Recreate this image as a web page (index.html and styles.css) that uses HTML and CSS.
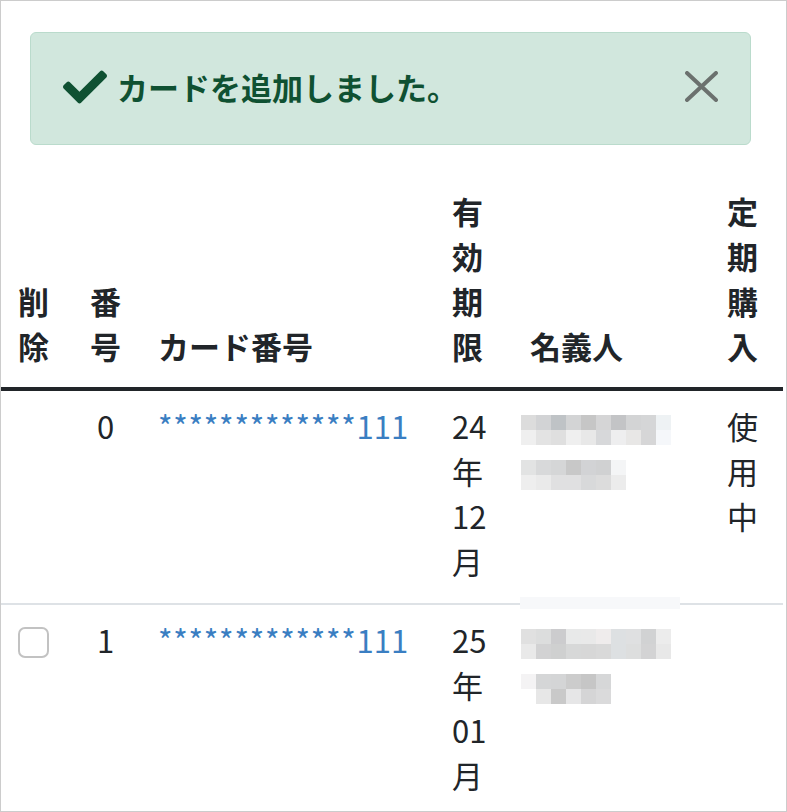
FILE: index.html
```html
<!DOCTYPE html>
<html lang="ja">
<head>
<meta charset="utf-8">
<title>カード一覧</title>
<link rel="stylesheet" href="styles.css">
</head>
<body>
<div class="page">
  <div class="alert">
    <svg class="alert-icon" viewBox="0 0 512 512" aria-hidden="true"><path d="M173.898 439.404l-166.4-166.4c-9.997-9.997-9.997-26.206 0-36.204l36.203-36.204c9.997-9.998 26.207-9.998 36.204 0L192 312.69 432.095 72.596c9.997-9.997 26.207-9.997 36.204 0l36.203 36.204c9.997 9.997 9.997 26.206 0 36.204l-294.4 294.401c-9.998 9.997-26.207 9.997-36.204-.001z"/></svg>
    <span class="alert-text">カードを追加しました。</span>
    <button class="alert-close" type="button" aria-label="閉じる">
      <svg viewBox="0 0 33 31"><path d="M2 2 L31 29 M31 2 L2 29"/></svg>
    </button>
  </div>

  <table class="cards">
    <colgroup>
      <col class="w-del"><col class="w-no"><col class="w-card"><col class="w-exp"><col class="w-name"><col class="w-sub">
    </colgroup>
    <thead>
      <tr>
        <th>削除</th>
        <th class="center">番号</th>
        <th>カード番号</th>
        <th>有効期限</th>
        <th class="name-head">名義人</th>
        <th>定期購入</th>
      </tr>
    </thead>
    <tbody>
      <tr>
        <td></td>
        <td class="center">0</td>
        <td><a class="card-no" href="#"><span class="mask">*************</span>111</a></td>
        <td>24年12月</td>
        <td class="name spill">
          <div class="name-line"><span class="mosaic m1a"></span></div>
          <div class="name-line"><span class="mosaic m1b"></span></div>
        </td>
        <td>使用中</td>
      </tr>
      <tr>
        <td><input class="check" type="checkbox" aria-label="削除"></td>
        <td class="center">1</td>
        <td><a class="card-no" href="#"><span class="mask">*************</span>111</a></td>
        <td>25年01月</td>
        <td class="name">
          <div class="name-line"><span class="mosaic m2a"></span></div>
          <div class="name-line"><span class="mosaic m2b"></span></div>
        </td>
        <td></td>
      </tr>
    </tbody>
  </table>
</div>
</body>
</html>
```

FILE: styles.css
```css
html, body {
  margin: 0;
  padding: 0;
  background: #ffffff;
}

body {
  font-family: "Noto Sans CJK JP", "Noto Sans", sans-serif;
  font-size: 31px;
  line-height: 45px;
  color: #212529;
}

.page {
  box-sizing: border-box;
  width: 787px;
  height: 812px;
  border: 1px solid #cccccc;
  overflow: hidden;
}

/* ---------- alert ---------- */
.alert {
  box-sizing: border-box;
  display: flex;
  align-items: center;
  width: 721px;
  height: 113px;
  margin: 31px 0 30px 29px;
  padding: 0 32px 4px 32px;
  background: #d1e7dd;
  border: 1px solid #badbcc;
  border-radius: 6px;
  color: #0f5132;
}

.alert-icon {
  width: 44px;
  height: 44px;
  fill: #0f5132;
  flex: none;
}

.alert-text {
  margin-left: 10px;
  font-weight: 700;
  flex: 1;
}

.alert-close {
  flex: none;
  width: 33px;
  height: 31px;
  padding: 0;
  margin: 0;
  border: 0;
  background: transparent;
  display: block;
}

.alert-close svg {
  display: block;
  width: 33px;
  height: 31px;
  stroke: #6b716e;
  stroke-width: 4;
  stroke-linecap: round;
  fill: none;
}

/* ---------- table ---------- */
.cards {
  table-layout: fixed;
  width: 782px;
  border-collapse: collapse;
  border-spacing: 0;
}

.w-del { width: 73px; }
.w-no { width: 68px; }
.w-card { width: 294px; }
.w-exp { width: 69px; }
.w-name { width: 206px; }
.w-sub { width: 72px; }

.cards th,
.cards td {
  padding: 16px 16px;
  text-align: left;
  line-height: 45px;
}

.cards th:first-child,
.cards td:first-child {
  padding-left: 17px;
}

.cards th {
  vertical-align: bottom;
  font-weight: 700;
  padding-top: 13px;
  padding-bottom: 19px;
  border-bottom: 4px solid #212529;
}

.cards td {
  vertical-align: top;
  font-weight: 400;
  padding-top: 12px;
  padding-bottom: 20px;
  border-bottom: 2px solid #dee2e6;
}

.cards .center {
  text-align: center;
  padding-right: 21px;
}

.cards .name-head {
  padding-left: 25px;
}

.card-no {
  color: #3a7ec2;
  text-decoration: none;
  white-space: nowrap;
}

.mask {
  letter-spacing: 0.8px;
}

.check {
  appearance: none;
  -webkit-appearance: none;
  box-sizing: border-box;
  display: block;
  width: 31px;
  height: 31px;
  margin: 10px 0 0 0;
  border: 2px solid #c2c2c2;
  border-radius: 7px;
  background: #ffffff;
}

/* ---------- pixelated names ---------- */
.name {
  position: relative;
}

.name-line {
  height: 45px;
}

.mosaic {
  display: block;
  height: 30px;
  position: relative;
  top: 12px;
  background-repeat: no-repeat;
  background-size: 100% 15px;
  background-position: 0 0, 0 15px;
}

.m1a {
  width: 150px;
  background-image:
    linear-gradient(to right, #dcdcdc 0 15px, #d2d3d5 15px 30px, #bfc3c6 30px 45px, #d3d4d5 45px 60px, #c6c6c6 60px 75px, #d5d5d6 75px 90px, #c3c4c6 90px 105px, #d3d4d5 105px 120px, #d5d6d7 120px 135px, #eef2f4 135px 150px),
    linear-gradient(to right, #efefef 0 15px, #e3e3e3 15px 30px, #dfdfdf 30px 45px, #efefef 45px 60px, #e8e8e8 60px 75px, #d7d8da 75px 90px, #eeeeef 90px 105px, #e8e7e6 105px 120px, #d6d6d7 120px 135px, #f5f7fa 135px 150px);
}

.m1b {
  width: 105px;
  background-image:
    linear-gradient(to right, #e2e3e3 0 15px, #d8d9da 15px 30px, #d5d6d7 30px 45px, #c8c8c8 45px 60px, #d2d3d5 60px 75px, #d0d1d2 75px 90px, #f4f5f6 90px 105px),
    linear-gradient(to right, #eeeeee 0 15px, #eaeaea 15px 30px, #e0e0e1 30px 45px, #e0e0e1 45px 60px, #d8d9da 60px 75px, #dcdcdc 75px 90px, #ececec 90px 105px);
}

.m2a {
  width: 150px;
  background-image:
    linear-gradient(to right, #e0e0e0 0 15px, #dcdddd 15px 30px, #ccccce 30px 45px, #e8e9e9 45px 60px, #e9e9e9 60px 75px, #efecec 75px 90px, #dde0e2 90px 105px, #dfe0e1 105px 120px, #d1d2d3 120px 135px, #ececec 135px 150px),
    linear-gradient(to right, #e9e9e9 0 15px, #d2d2d3 15px 30px, #cfd0d0 30px 45px, #d7d8d8 45px 60px, #d7d7d7 60px 75px, #d9d9d9 75px 90px, #dde0e2 90px 105px, #dddede 105px 120px, #d3d3d4 120px 135px, #e8e8e8 135px 150px);
}

.m2b {
  width: 90px;
  background-image:
    linear-gradient(to right, #f4f3f4 0 15px, #d5d6d7 15px 30px, #d4d5d6 30px 45px, #cccccc 45px 60px, #c6c6c6 60px 75px, #d6d7d8 75px 90px),
    linear-gradient(to right, #ffffff 0 15px, #e7e7e7 15px 30px, #c9c9c9 30px 45px, #e6e6e7 45px 60px, #d5d5d6 60px 75px, #dadadb 75px 90px);
}

.spill::after {
  content: "";
  position: absolute;
  left: 15px;
  bottom: -6px;
  width: 160px;
  height: 12px;
  background: #f7f8fa;
}
```
